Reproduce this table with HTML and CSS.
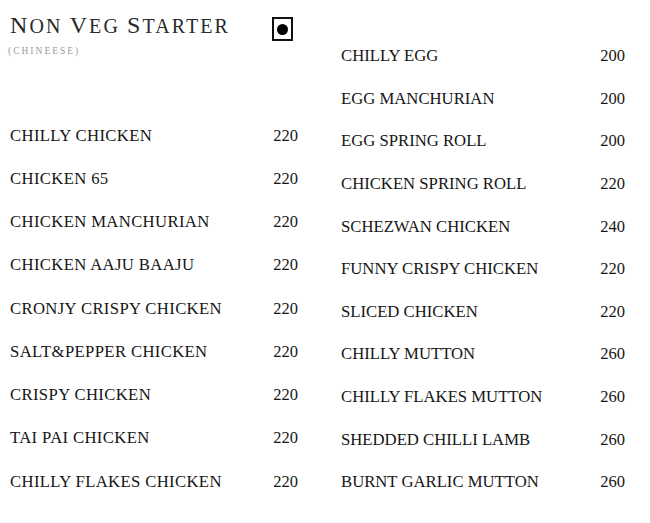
FILE: index.html
```html
<!DOCTYPE html>
<html>
<head>
<meta charset="utf-8">
<link rel="stylesheet" href="styles.css">
</head>
<body>
<div class="page">
  <section class="col col-left">
    <header class="head">
      <div class="title-row">
        <h1 class="title"><span class="cap">N</span>ON <span class="cap">V</span>EG <span class="cap">S</span>TARTER</h1>
        <span class="nonveg"><span class="dot"></span></span>
      </div>
      <div class="sub">(CHINEESE)</div>
    </header>
    <ul class="items left-items">
      <li class="row"><span class="name">CHILLY CHICKEN</span><span class="price">220</span></li>
      <li class="row"><span class="name">CHICKEN 65</span><span class="price">220</span></li>
      <li class="row"><span class="name">CHICKEN MANCHURIAN</span><span class="price">220</span></li>
      <li class="row"><span class="name">CHICKEN AAJU BAAJU</span><span class="price">220</span></li>
      <li class="row"><span class="name">CRONJY CRISPY CHICKEN</span><span class="price">220</span></li>
      <li class="row"><span class="name">SALT&amp;PEPPER CHICKEN</span><span class="price">220</span></li>
      <li class="row"><span class="name">CRISPY CHICKEN</span><span class="price">220</span></li>
      <li class="row"><span class="name">TAI PAI CHICKEN</span><span class="price">220</span></li>
      <li class="row"><span class="name">CHILLY FLAKES CHICKEN</span><span class="price">220</span></li>
    </ul>
  </section>
  <section class="col col-right">
    <ul class="items right-items">
      <li class="row"><span class="name">CHILLY EGG</span><span class="price">200</span></li>
      <li class="row"><span class="name">EGG MANCHURIAN</span><span class="price">200</span></li>
      <li class="row"><span class="name">EGG SPRING ROLL</span><span class="price">200</span></li>
      <li class="row"><span class="name">CHICKEN SPRING ROLL</span><span class="price">220</span></li>
      <li class="row"><span class="name">SCHEZWAN CHICKEN</span><span class="price">240</span></li>
      <li class="row"><span class="name">FUNNY CRISPY CHICKEN</span><span class="price">220</span></li>
      <li class="row"><span class="name">SLICED CHICKEN</span><span class="price">220</span></li>
      <li class="row"><span class="name">CHILLY MUTTON</span><span class="price">260</span></li>
      <li class="row"><span class="name">CHILLY FLAKES MUTTON</span><span class="price">260</span></li>
      <li class="row"><span class="name">SHEDDED CHILLI LAMB</span><span class="price">260</span></li>
      <li class="row"><span class="name">BURNT GARLIC MUTTON</span><span class="price">260</span></li>
    </ul>
  </section>
</div>
</body>
</html>
```

FILE: styles.css
```css
* { box-sizing: border-box; }
html, body {
  margin: 0;
  padding: 0;
  background: #ffffff;
}
body {
  width: 650px;
  height: 523px;
  overflow: hidden;
  font-family: "Liberation Serif", "Times New Roman", serif;
  color: #161616;
}
.page {
  display: flex;
  width: 650px;
}
.col-left {
  width: 288px;
  margin-left: 10px;
}
.col-right {
  width: 285px;
  margin-left: 42px;
  padding-top: 35px;
}
.head {
  height: 114px;
  padding-top: 12px;
}
.title-row {
  display: flex;
  align-items: flex-start;
}
.title {
  margin: 0;
  font-weight: normal;
  font-size: 20px;
  line-height: 26px;
  letter-spacing: 2.1px;
  color: #2a2a2a;
  width: 262px;
}
.cap { font-size: 24px; }
.nonveg {
  width: 21px;
  height: 24px;
  margin-top: 5px;
  border: 2px solid #111;
  display: flex;
  align-items: center;
  justify-content: center;
}
.dot {
  width: 11px;
  height: 11px;
  border-radius: 50%;
  background: #000;
}
.sub {
  font-size: 9.5px;
  letter-spacing: 2px;
  color: #9a9a9a;
  margin-top: 5px;
  margin-left: -2px;
}
.items {
  list-style: none;
  margin: 0;
  padding: 0;
}
.row {
  display: flex;
  justify-content: space-between;
  align-items: center;
  font-size: 16.7px;
  line-height: 20px;
}
.left-items .row { height: 43.25px; }
.left-items .name { letter-spacing: 0.35px; }
.right-items .row { height: 42.6px; }
.price { font-size: 16.5px; }
.right-items .name { padding-left: 1px; }
```
